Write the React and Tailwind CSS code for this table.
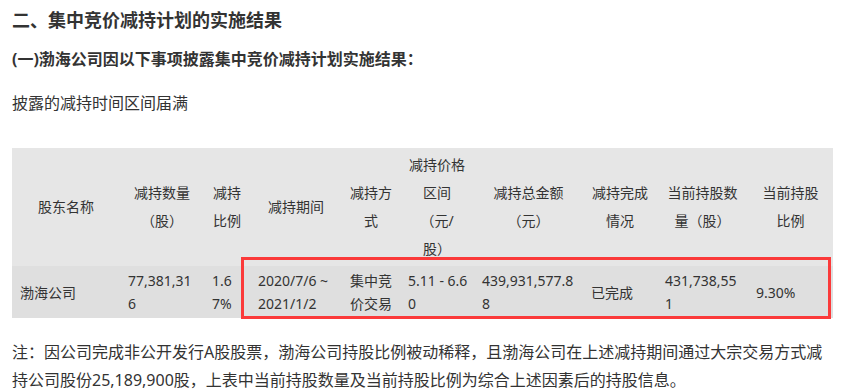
export default function App() {
  const font = { fontFamily: '"Noto Sans", "Noto Sans CJK SC", sans-serif' }

  const headers = [
    ['股东名称'],
    ['减持数量', '（股）'],
    ['减持', '比例'],
    ['减持期间'],
    ['减持方', '式'],
    ['减持价格', '区间', '（元/', '股）'],
    ['减持总金额', '（元）'],
    ['减持完成', '情况'],
    ['当前持股数', '量（股）'],
    ['当前持股', '比例'],
  ]

  const row = [
    ['渤海公司'],
    ['77,381,31', '6'],
    ['1.6', '7%'],
    ['2020/7/6 ~', '2021/1/2'],
    ['集中竞', '价交易'],
    ['5.11 - 6.6', '0'],
    ['439,931,577.8', '8'],
    ['已完成'],
    ['431,738,55', '1'],
    ['9.30%'],
  ]

  const widths = [108, 84, 46, 92, 58, 74, 109, 74, 91, 85]

  return (
    <div className="min-h-screen bg-white px-3 text-[#333333]" style={font}>
      {/* Section title */}
      <h2 className="pt-[6px] text-[18px] font-bold leading-[28px]">二、集中竞价减持计划的实施结果</h2>
      <h3 className="mt-[11px] text-[16px] font-bold leading-[28px]">(一)渤海公司因以下事项披露集中竞价减持计划实施结果：</h3>
      <p className="mt-[16px] text-[16px] leading-[28px]">披露的减持时间区间届满</p>

      {/* Result table */}
      <div className="relative mt-[31px] w-[821px]">
        <table className="w-[821px] table-fixed border-collapse text-[14px]">
          <colgroup>
            {widths.map((w, i) => (
              <col key={i} style={{ width: w }} />
            ))}
          </colgroup>
          <thead>
            <tr className="bg-[#e6e6e6]">
              {headers.map((lines, i) => (
                <th key={i} className="h-[118px] px-2 py-[3px] text-center align-middle font-normal leading-[28px]">
                  {lines.map((l, j) => (
                    <div key={j}>{l}</div>
                  ))}
                </th>
              ))}
            </tr>
          </thead>
          <tbody>
            <tr className="bg-[#dfdfdf]">
              {row.map((lines, i) => (
                <td key={i} className="h-[52px] px-2 py-[3px] text-left align-middle leading-[23px]">
                  {lines.map((l, j) => (
                    <div key={j} className="whitespace-nowrap">{l}</div>
                  ))}
                </td>
              ))}
            </tr>
          </tbody>
        </table>
        {/* Highlight annotation */}
        <div className="pointer-events-none absolute left-[229px] top-[109px] h-[62px] w-[590px] border-[3px] border-[#fb3a3a]" />
      </div>

      {/* Note */}
      <p className="mt-[20px] text-[16px] leading-[28px]">
        注：因公司完成非公开发行A股股票，渤海公司持股比例被动稀释，且渤海公司在上述减持期间通过大宗交易方式减持公司股份25,189,900股，上表中当前持股数量及当前持股比例为综合上述因素后的持股信息。
      </p>
    </div>
  )
}
